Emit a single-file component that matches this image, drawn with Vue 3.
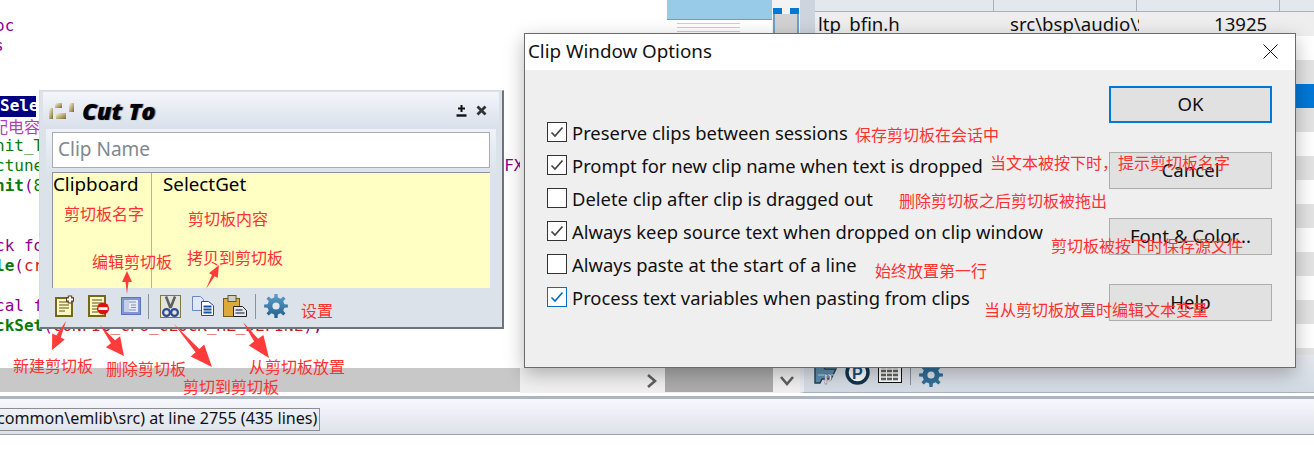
<script setup>
const P = '#8b008b'
const G = '#0a7a0a'
const R = '#d01818'
const lines = [
  { parts: [['oc', P]] },
  { parts: [['s', P]], cls: 'far' },
  { parts: [] },
  { parts: [] },
  { sel: 'Sele' },
  { parts: [['配电容', '#b040b0']], cls: 'cjk' },
  { parts: [['nit_T', G]] },
  { parts: [['ctune', G]], fx: 'FX' },
  { parts: [['nit', G, 1], ['(', P], ['8', G]] },
  { parts: [] },
  { parts: [] },
  { parts: [['ck fo', P]] },
  { parts: [['le', G, 1], ['(', P], ['cr', R]] },
  { parts: [] },
  { parts: [['cal f', P]] },
  { parts: [['ckSet', G, 1], ['(', P], ['CONFIG_CPU_CLOCK_HZ_DEFINE', R], [');', P]] },
]
const rows = ['#ffffff', '#e3e3e3', '#0078d7', '#e3e3e3', '#ffffff', '#e3e3e3', '#ffffff', '#e3e3e3', '#ffffff', '#e3e3e3', '#ffffff', '#e3e3e3', '#ffffff', '#e3e3e3']
const opts = [
  { label: 'Preserve clips between sessions', on: true },
  { label: 'Prompt for new clip name when text is dropped', on: true },
  { label: 'Delete clip after clip is dragged out', on: false },
  { label: 'Always keep source text when dropped on clip window', on: true },
  { label: 'Always paste at the start of a line', on: false },
  { label: 'Process text variables when pasting from clips', on: true, focus: true },
]
const notes = [
  { x: 64, y: 203, t: '剪切板名字' },
  { x: 188, y: 208, t: '剪切板内容' },
  { x: 92, y: 251, t: '编辑剪切板' },
  { x: 187, y: 247, t: '拷贝到剪切板' },
  { x: 301, y: 300, t: '设置' },
  { x: 13, y: 355, t: '新建剪切板' },
  { x: 106, y: 358, t: '删除剪切板' },
  { x: 183, y: 376, t: '剪切到剪切板' },
  { x: 249, y: 356, t: '从剪切板放置' },
  { x: 855, y: 124, t: '保存剪切板在会话中' },
  { x: 990, y: 152, t: '当文本被按下时，提示剪切板名字' },
  { x: 899, y: 190, t: '删除剪切板之后剪切板被拖出' },
  { x: 1051, y: 235, t: '剪切板被按下时保存源文件' },
  { x: 875, y: 260, t: '始终放置第一行' },
  { x: 984, y: 299, t: '当从剪切板放置时编辑文本变量' },
]
function arrow(x1, y1, x2, y2, hl, hw, sw) {
  const len = Math.hypot(x2 - x1, y2 - y1)
  const ux = (x2 - x1) / len
  const uy = (y2 - y1) / len
  const nx = -uy
  const ny = ux
  const bx = x2 - ux * hl
  const by = y2 - uy * hl
  const p = [
    [x1, y1],
    [bx + nx * sw / 2, by + ny * sw / 2],
    [bx + nx * hw / 2, by + ny * hw / 2],
    [x2, y2],
    [bx - nx * hw / 2, by - ny * hw / 2],
    [bx - nx * sw / 2, by - ny * sw / 2],
  ]
  return 'M' + p.map(q => q[0].toFixed(1) + ' ' + q[1].toFixed(1)).join(' L') + ' Z'
}
const arrows = [
  arrow(127, 294, 127, 271, 11, 10, 3),
  arrow(66, 321, 52, 350, 15, 14, 5),
  arrow(100, 325, 124, 356, 18, 18, 5),
  arrow(174, 324, 212, 367, 22, 18, 5),
  arrow(243, 322, 269, 358, 22, 18, 5),
  arrow(206, 289, 219, 265, 12, 10, 3),
]
function gear(size, teeth, rOut, rIn) {
  const c = size / 2
  const step = (Math.PI * 2) / teeth
  const pts = []
  for (let i = 0; i < teeth; i++) {
    const a = i * step - Math.PI / 2
    const w = step * 0.2
    pts.push([a - w * 1.35, rIn], [a - w * 0.85, rOut], [a + w * 0.85, rOut], [a + w * 1.35, rIn])
  }
  return 'M' + pts.map(([a, r]) => (c + Math.cos(a) * r).toFixed(2) + ' ' + (c + Math.sin(a) * r).toFixed(2)).join(' L') + ' Z'
}
const gearD = gear(24, 8, 12, 8.6)
</script>

<template>
  <div class="desk">
    <div class="work">
      <div class="editor">
        <div class="lines">
          <div v-for="(l, i) in lines" :key="i" class="line" :class="l.cls">
            <span v-if="l.sel" class="sel">{{ l.sel }}</span>
            <span v-for="(p, j) in l.parts" :key="j" :class="{ strong: p[2] }" :style="{ color: p[1] }">{{ p[0] }}</span>
            <span v-if="l.fx" class="fx">{{ l.fx }}</span>
          </div>
        </div>
        <div class="hscroll"></div>
      </div>

      <div class="mid">
        <div class="mid-top">
          <div class="minimap"><div class="minimap-view"></div></div>
          <div class="mapside">
            <div class="mapcaps"><i></i><i></i></div>
            <div class="mapbar"></div>
          </div>
        </div>
        <div class="mid-scroll">
          <div class="sb-left">
            <svg width="14" height="16" viewBox="0 0 14 16"><path d="M3 2 L10 8 L3 14" fill="none" stroke="#606060" stroke-width="2.6"/></svg>
          </div>
          <div class="sb-thumb"></div>
          <div class="sb-right">
            <svg width="16" height="14" viewBox="0 0 16 14"><path d="M2 3 L8 10 L14 3" fill="none" stroke="#606060" stroke-width="2.6"/></svg>
          </div>
        </div>
      </div>

      <div class="right">
        <div class="tablewrap">
          <div class="band"></div>
          <div class="table">
            <div class="thead"><span class="h1"></span><span class="h2"></span><span class="h3"></span></div>
            <div class="trow first"><span class="c1">ltp_bfin.h</span><span class="c2">src\bsp\audio\S</span><span class="c3">13925</span></div>
            <div v-for="(r, i) in rows" :key="i" class="trow" :style="{ background: r }"></div>
          </div>
        </div>
        <div class="mini-toolbar">
          <svg width="23" height="22" viewBox="0 0 23 22"><path d="M1 3h8l2 3h11l-5 10H8l-2 4H1z" fill="#5f8fae" stroke="#1f4058" stroke-width="1.4"/><path d="M4 12h16" stroke="#a9c6da" stroke-width="1.4"/><text x="10" y="18" font-size="13" font-weight="700" fill="#fff" stroke="#1f4f78" stroke-width="0.4" font-family="Liberation Sans, sans-serif">p</text></svg>
          <svg width="25" height="22" viewBox="0 0 25 22"><circle cx="12.5" cy="9.5" r="10.5" fill="#fff" stroke="#12344f" stroke-width="3.4"/><text x="7" y="16" font-size="16" font-weight="700" fill="#12507f" font-family="Liberation Sans, sans-serif">P</text></svg>
          <svg width="24" height="20" viewBox="0 0 24 20"><rect x="0.5" y="0.5" width="23" height="19" fill="#fff" stroke="#111"/><path d="M3 4h18M3 8h18M3 12h18M3 16h18" stroke="#666" stroke-width="2.4" stroke-dasharray="5 1"/></svg>
          <span class="mini-sep"></span>
          <svg width="24" height="24" viewBox="0 0 24 24"><path :d="gearD" fill="#2f6f9a"/><circle cx="12" cy="12" r="3.6" fill="#dfe5ec"/></svg>
        </div>
      </div>
    </div>

    <div class="status">
      <div class="status-cell">common\emlib\src) at line 2755 (435 lines)</div>
    </div>

    <!-- Cut To floating window -->
    <div class="cut">
      <div class="cut-title">
        <svg width="25" height="17" viewBox="0 0 25 17">
          <defs><linearGradient id="goldg" x1="0" y1="0" x2="1" y2="1"><stop offset="0" stop-color="#fff8d0"/><stop offset="1" stop-color="#7a6a28"/></linearGradient></defs>
          <rect x="0" y="6" width="4" height="11" fill="url(#goldg)"/><rect x="6" y="1" width="7" height="5" fill="url(#goldg)"/><rect x="7" y="11" width="10" height="6" fill="url(#goldg)"/><rect x="20" y="1" width="5" height="9" fill="url(#goldg)"/>
        </svg>
        <span class="cut-name">Cut To</span>
        <span class="spacer"></span>
        <svg width="11" height="12" viewBox="0 0 11 12"><path d="M5.5 0v7M2 3.5h7" stroke="#111" stroke-width="2"/><path d="M0.5 10.5h10" stroke="#111" stroke-width="2.4"/></svg>
        <svg class="cut-x" width="11" height="11" viewBox="0 0 11 11"><path d="M1.5 1.5l8 8M9.5 1.5l-8 8" stroke="#333" stroke-width="2.8"/></svg>
      </div>
      <div class="cut-body">
        <div class="clip-input">Clip Name</div>
        <div class="clip-list">
          <div class="clip-col1">Clipboard</div>
          <div class="clip-col2">SelectGet</div>
        </div>
        <div class="clip-tools">
          <svg width="20" height="22" viewBox="0 0 20 22" class="t1">
            <rect x="1" y="3" width="16" height="18" fill="#fff8c4" stroke="#75681a" stroke-width="2"/>
            <path d="M4 7h10M4 10h10M4 13h10M4 16h6" stroke="#5f5518" stroke-width="1.2"/>
            <path d="M15 0.5v8M11 4.5h8" stroke="#5a4020" stroke-width="4.4"/><path d="M15 1.5v6M12 4.5h6" stroke="#fff" stroke-width="2.2"/>
          </svg>
          <svg width="22" height="22" viewBox="0 0 22 22" class="t2">
            <rect x="1" y="1" width="16" height="20" fill="#fff8c4" stroke="#75681a" stroke-width="2"/>
            <path d="M4 5h10M4 8h10M4 11h8M4 14h6M4 17h6" stroke="#5f5518" stroke-width="1.2"/>
            <circle cx="15" cy="13.5" r="6" fill="#e01010"/><rect x="10.5" y="12.2" width="9" height="2.8" fill="#fff"/>
          </svg>
          <svg width="20" height="18" viewBox="0 0 20 18" class="t3">
            <rect x="0.5" y="0.5" width="19" height="17" fill="#7f95d8" stroke="#5e74bc"/>
            <rect x="3" y="3" width="14" height="12" fill="#e6eaf6"/>
            <rect x="3" y="3" width="5" height="12" fill="#c5cfe8"/>
            <path d="M8 5h7M10 8h5M10 10.5h5M8 13h7" stroke="#8590aa"/>
          </svg>
          <span class="tsep"></span>
          <svg width="21" height="23" viewBox="0 0 21 23" class="t4">
            <rect x="0.5" y="0.5" width="20" height="22" fill="#e4e4d8" stroke="#807a3a"/>
            <path d="M6 1.5 L10.5 13 M15 1.5 L10.5 13" stroke="#5f6066" stroke-width="2.6"/>
            <circle cx="6.5" cy="17.5" r="3.4" fill="none" stroke="#2a4a9a" stroke-width="2.2"/><circle cx="14.5" cy="17.5" r="3.4" fill="none" stroke="#2a4a9a" stroke-width="2.2"/>
          </svg>
          <svg width="22" height="20" viewBox="0 0 22 20" class="t5">
            <path d="M0.5 0.5h8l3 3v11h-11z" fill="#dfe8fa" stroke="#6a88c0"/>
            <path d="M9.5 5.5h7l5 4v10h-12z" fill="#fff" stroke="#1f4f9f"/>
            <path d="M11.5 10.5h8M11.5 13.5h8M11.5 16.5h8" stroke="#1f4f9f" stroke-width="1.8"/>
          </svg>
          <svg width="24" height="22" viewBox="0 0 24 22" class="t6">
            <rect x="0.5" y="3.5" width="16" height="18" fill="#dcaa38" stroke="#6f5a20"/>
            <rect x="5" y="0.5" width="8" height="6" fill="#cfcfc0" stroke="#5a5a40"/>
            <path d="M10.5 11.5h9l4 4v6h-13z" fill="#e8e8ea" stroke="#222"/>
            <path d="M12.5 15h7M12.5 18h9" stroke="#4d5a70" stroke-width="1.6"/>
          </svg>
          <span class="tsep second"></span>
          <svg width="24" height="24" viewBox="0 0 24 24" class="t7">
            <defs><linearGradient id="gearg" x1="0" y1="0" x2="0" y2="1"><stop offset="0" stop-color="#5f9fcb"/><stop offset="1" stop-color="#1f5f8a"/></linearGradient></defs>
            <path :d="gearD" fill="url(#gearg)"/>
            <circle cx="12" cy="12" r="3.6" fill="#dfe6ee"/>
          </svg>
        </div>
      </div>
    </div>

    <!-- options dialog -->
    <div class="dlg">
      <div class="dlg-title">
        <span>Clip Window Options</span>
        <svg class="close" width="15" height="15" viewBox="0 0 15 15"><path d="M0.5 0.5 L14.5 14.5 M14.5 0.5 L0.5 14.5" stroke="#111" stroke-width="1"/></svg>
      </div>
      <div class="dlg-body">
        <div class="opts">
          <label v-for="o in opts" :key="o.label" class="opt">
            <span class="box" :class="{ focus: o.focus }">
              <svg v-if="o.on" width="14" height="14" viewBox="0 0 14 14"><path d="M1.5 7.5 L5 11 L12.5 2.5" fill="none" :stroke="o.focus ? '#0a6cc4' : '#444'" stroke-width="1.7"/></svg>
            </span>
            <span>{{ o.label }}</span>
          </label>
        </div>
        <div class="btns">
          <button class="btn def">OK</button>
          <button class="btn">Cancel</button>
          <button class="btn">Font &amp; Color...</button>
          <button class="btn">Help</button>
        </div>
      </div>
    </div>

    <!-- hand-drawn annotations over the screenshot -->
    <svg class="arrows" width="1314" height="454" viewBox="0 0 1314 454">
      <path v-for="a in arrows" :key="a" :d="a" fill="#ff3b3b"/>
    </svg>
    <span v-for="n in notes" :key="n.t" class="note" :style="{ left: n.x + 'px', top: n.y + 'px' }">{{ n.t }}</span>
  </div>
</template>

<style>
html, body { margin: 0; background: #fff; }
</style>

<style scoped>
.desk { position: relative; width: 1314px; height: 454px; overflow: hidden; background: #fff; font-family: "Noto Sans", "Noto Sans CJK SC", sans-serif; display: flex; flex-direction: column; }
.work { height: 393px; flex: none; display: flex; }

.editor { width: 520px; flex: none; display: flex; flex-direction: column; justify-content: space-between; overflow: hidden; }
.lines { padding-top: 16px; margin-left: -5px; }
.line { height: 20px; font-family: "DejaVu Sans Mono", monospace; font-size: 16px; line-height: 20px; white-space: nowrap; }
.line.far { margin-left: -1px; }
.line.cjk { margin-left: -3px; font-family: "Noto Sans CJK SC", sans-serif; }
.strong { font-weight: 700; }
.sel { display: inline-block; margin-left: 5px; width: 36px; height: 21px; overflow: hidden; background: #000080; color: #fff; font-weight: 700; }
.fx { color: #8b008b; margin-left: 461px; }
.hscroll { height: 24px; margin-bottom: 1px; background: #c8c8c8; }

.mid { width: 280px; flex: none; display: flex; flex-direction: column; }
.mid-top { flex: 1; display: flex; padding-left: 147px; min-height: 0; }
.minimap { width: 105px; background: #fff repeating-linear-gradient(transparent 0 3px, #d8c8d8 3px 4px); background-size: 60% 100%; background-repeat: no-repeat; background-position: 10px 0; }
.minimap-view { height: 20px; box-sizing: border-box; background: #98cbe8; border-bottom: 1px solid #8a9aa4; }
.mapside { width: 28px; display: flex; flex-direction: column; background: #f3f3f3; }
.mapcaps { height: 14px; box-sizing: border-box; display: flex; justify-content: space-between; padding: 8px 1px 0; }
.mapcaps i { width: 9px; height: 6px; background: #0078d7; }
.mapbar { flex: 1; box-sizing: border-box; margin: 0 1px; background: #d2d2d2; border: 1px solid #6f9fc4; border-width: 0 2px; }
.mid-scroll { height: 25px; flex: none; display: flex; align-items: stretch; background: #f0f0f0; }
.sb-left { width: 145px; display: flex; align-items: center; justify-content: flex-end; padding-right: 6px; box-sizing: border-box; }
.sb-thumb { width: 108px; height: 24px; background: #acacac; }
.sb-right { width: 27px; display: flex; align-items: center; justify-content: center; }

.right { width: 514px; flex: none; display: flex; flex-direction: column; }
.tablewrap { height: 355px; flex: none; display: flex; overflow: hidden; }
.band { width: 15px; flex: none; background: #cdd4dd; }
.table { flex: 1; font-size: 18.6px; color: #111; }
.thead { height: 12px; box-sizing: border-box; background: #e3e8ef; border-bottom: 1px solid #a9b0ba; display: flex; }
.thead span { border-right: 1px solid #a9b0ba; box-sizing: border-box; }
.h1 { width: 179px; } .h2 { width: 143px; } .h3 { width: 143px; }
.trow { height: 24px; display: flex; line-height: 23px; overflow: hidden; }
.trow.first { background: #eeeeee; }
.c1 { width: 179px; padding-left: 3px; box-sizing: border-box; }
.c2 { width: 129px; margin-left: 16px; white-space: nowrap; overflow: hidden; }
.c3 { margin-left: 75px; }
.mini-toolbar { height: 38px; flex: none; box-sizing: border-box; padding: 8px 0 0 10px; display: flex; align-items: flex-start; gap: 8px; background: linear-gradient(#e4e8ee, #d3dae3); border-left: 4px solid #e8ebf0; border-bottom: 1px solid #a9b0ba; }
.mini-sep { width: 1px; height: 22px; background: #8a929c; }

.status { margin-top: 3px; height: 39px; flex: none; box-sizing: border-box; border-top: 3px solid #adb5c0; border-bottom: 1px solid #a0a4aa; background: linear-gradient(#f6f8fc, #dde2ea); padding-top: 9px; }
.status-cell { width: 323px; height: 23px; margin-left: -3px; box-sizing: border-box; border: 1px solid #8e8e8e; border-left: 0; font-size: 16.1px; line-height: 19px; color: #111; white-space: nowrap; }

.cut { position: absolute; left: 39px; top: 90px; width: 465px; height: 239px; box-sizing: border-box; background: #dbe2ea; border: 1px solid #d4dbe4; border-right: 2px solid #6f757d; border-bottom: 2px solid #6f757d; display: flex; flex-direction: column; }
.cut-title { height: 37px; flex: none; margin: 1px 3px 0; display: flex; align-items: center; padding: 0 12px 0 6px; box-sizing: border-box; background: linear-gradient(#f3f6fb, #d9e0e9); }
.cut-name { margin-left: 8px; font-family: "Open Sans", "Liberation Sans", sans-serif; font-style: italic; font-weight: 800; font-size: 23.5px; color: #000; text-shadow: 1px 0 1px #3a5a80; }
.spacer { flex: 1; }
.cut-x { margin-left: 9px; }
.cut-body { flex: 1; margin: 0 6px; padding: 3px 6px 0 6px; display: flex; flex-direction: column; background: linear-gradient(#eef2f8, #dbe2ea 48px); }
.clip-input { height: 36px; flex: none; box-sizing: border-box; border: 1px solid #a9adb3; background: #fff; color: #808890; font-size: 19px; line-height: 33px; padding-left: 5px; }
.clip-list { height: 116px; flex: none; margin-top: 4px; box-sizing: border-box; display: flex; background: #ffffc4; border-top: 1px solid #8e949a; border-left: 1px solid #8e949a; font-size: 18.8px; color: #000; line-height: 23px; }
.clip-col1 { width: 99px; box-sizing: border-box; border-right: 1px solid #b4b4a0; }
.clip-col2 { padding-left: 11px; }
.clip-tools { flex: 1; display: flex; align-items: center; padding: 0 0 3px 3px; }
.t2 { margin-left: 13px; }
.t3 { margin-left: 11px; }
.t5 { margin-left: 11px; }
.t6 { margin-left: 9px; }
.tsep { width: 1px; height: 25px; background: #8a929c; margin: 0 11px 0 7px; }
.tsep.second { margin: 0 8px; }

.dlg { position: absolute; left: 524px; top: 33px; width: 772px; height: 335px; box-sizing: border-box; border: 1px solid #6a6a6a; background: #efefef; box-shadow: 0 6px 18px rgba(0,0,0,.28); display: flex; flex-direction: column; }
.dlg-title { height: 36px; flex: none; background: #fff; display: flex; align-items: center; justify-content: space-between; padding: 0 17px 2px 3px; box-sizing: border-box; font-size: 18.8px; color: #111; }
.close { margin-top: 1px; }
.dlg-body { flex: 1; display: flex; justify-content: space-between; }
.opts { padding: 52px 0 0 22px; display: flex; flex-direction: column; gap: 13px; }
.opt { display: flex; align-items: center; gap: 5px; height: 20px; font-size: 18.4px; color: #111; white-space: nowrap; }
.box { width: 20px; height: 20px; box-sizing: border-box; border: 1px solid #333; background: #fff; display: flex; align-items: center; justify-content: center; flex: none; }
.box.focus { border-color: #0a6cc4; }
.btns { padding: 16px 23px 0 0; display: flex; flex-direction: column; gap: 29px; }
.btn { width: 163px; height: 37px; box-sizing: border-box; background: #e1e1e1; border: 1px solid #adadad; font-family: inherit; font-size: 18.6px; color: #111; padding: 0 0 2px; }
.btn.def { border: 2px solid #0078d7; }

.arrows { position: absolute; left: 0; top: 0; pointer-events: none; }
.note { position: absolute; color: #ff3030; font-family: "Noto Sans CJK SC", sans-serif; font-size: 16px; line-height: 20px; white-space: nowrap; }
</style>
